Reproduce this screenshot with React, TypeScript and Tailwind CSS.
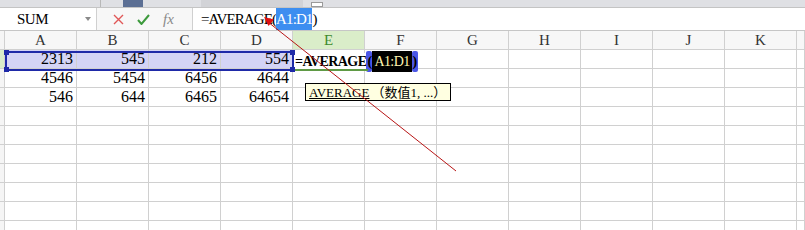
import React from "react";

const COLS = ["A", "B", "C", "D", "E", "F", "G", "H", "I", "J", "K", ""];

const DATA: string[][] = [
  ["2313", "545", "212", "554"],
  ["4546", "5454", "6456", "4644"],
  ["546", "644", "6465", "64654"],
];

const ROW_COUNT = 10;

function FormulaBar() {
  return (
    <div className="flex h-[23px] items-center border-b border-[#c6c6c6] bg-[#f7f7f7]">
      <div className="flex h-[22px] w-[97px] items-center justify-between border-r border-[#d0d0d0] bg-white pl-[17px] pr-[5px]">
        <span className="text-[15px] leading-none tracking-[-0.5px] text-black">SUM</span>
        <svg width="6" height="4" viewBox="0 0 6 4">
          <path d="M0 0h6L3 4z" fill="#8a8a8a" />
        </svg>
      </div>
      <div className="flex w-[95px] items-center gap-[13px] pl-[16px]">
        <svg width="11" height="11" viewBox="0 0 11 11">
          <path d="M1 1l9 9M10 1l-9 9" stroke="#e05757" strokeWidth="1.4" />
        </svg>
        <svg width="13" height="11" viewBox="0 0 13 11">
          <path d="M1 6l3.5 4L12 1" stroke="#3d9a3d" strokeWidth="2" fill="none" />
        </svg>
        <span className="text-[15px] italic leading-none text-[#8a8a8a]">fx</span>
      </div>
      <div className="flex h-[22px] flex-1 items-center border-l border-[#d0d0d0] bg-white pl-[8px] text-[15px] tracking-[-0.9px] text-black">
        <span>=AVERAGE(</span>
        <span className="bg-[#3d8ef0] text-white">A1:D1</span>
        <span>)</span>
      </div>
    </div>
  );
}

export default function App() {
  return (
    <div className="relative h-[230px] w-[805px] overflow-hidden bg-white [font-family:'Liberation_Serif','Noto_Sans_CJK_SC',serif]">
      <div className="flex h-[8px] items-stretch border-b border-[#c4c4c4] bg-[#dfe0e4]">
        <div className="w-[100px]" />
        <div className="w-px bg-[#b8b8b8]" />
        <div className="w-[22px]" />
        <div className="w-[20px] bg-[#5c6f94]" />
        <div className="w-[58px]" />
        <div className="w-[102px] bg-[#d2d3d7]" />
        <div className="w-[8px]" />
        <div className="mt-[2px] w-[12px] border border-[#9a9a9a] bg-white" />
        <div className="flex-1" />
      </div>
      <FormulaBar />
      <div className="grid grid-cols-[5px_repeat(11,72px)_1fr] grid-rows-[repeat(11,19px)]">
        <div className="border-r border-b border-[#d0d0d0] bg-[#f5f5f5]" />
        {COLS.map((c, i) => (
          <div
            key={c + i}
            className={
              i === 4
                ? "flex items-center justify-center border-r border-b border-[#d0d0d0] bg-[#daedc9] text-[15px] text-[#3f8a2c]"
                : "flex items-center justify-center border-r border-b border-[#d0d0d0] bg-[#f7f7f7] text-[15px] text-[#333]"
            }
          >
            {c}
          </div>
        ))}
        {Array.from({ length: ROW_COUNT }).map((_, r) => (
          <React.Fragment key={r}>
            <div className={r === 0 ? "border-r border-b border-[#d0d0d0] bg-[#daedc9]" : "border-r border-b border-[#d0d0d0] bg-[#f5f5f5]"} />
            {COLS.map((c, ci) => {
              const val = DATA[r]?.[ci];
              const sel = r === 0 && ci < 4;
              return (
                <div
                  key={ci}
                  className={
                    sel
                      ? "flex items-center justify-end border-r border-b border-[#d0d0d0] bg-[#d4d4f6] pr-[3px] text-[16px] leading-none text-black"
                      : "flex items-center justify-end border-r border-b border-[#d0d0d0] pr-[3px] text-[16px] leading-none text-black"
                  }
                >
                  {val}
                </div>
              );
            })}
          </React.Fragment>
        ))}
      </div>

      {/* selection frame A1:D1 */}
      <div className="absolute left-[5px] top-[51px] h-[20px] w-[289px] border-2 border-[#1f2aa8]">
        <div className="absolute -left-[3px] -top-[3px] h-[5px] w-[5px] bg-[#1f2aa8]" />
        <div className="absolute -right-[3px] -top-[3px] h-[5px] w-[5px] bg-[#1f2aa8]" />
        <div className="absolute -bottom-[3px] -left-[3px] h-[5px] w-[5px] bg-[#1f2aa8]" />
        <div className="absolute -bottom-[3px] -right-[3px] h-[5px] w-[5px] bg-[#1f2aa8]" />
      </div>

      {/* edited cell E1 */}
      <div className="absolute left-[295px] top-[53px] flex h-[17px] items-center bg-white text-[14px] font-bold tracking-[-0.6px] text-black">
        <span>=AVERAGE</span>
        <span className="rounded-[2px] bg-[#4b57e6] px-px">(</span>
        <span className="bg-black px-[2px] font-normal text-[#fff6b0]">A1:D1</span>
        <span className="rounded-[2px] bg-[#4b57e6] px-px">)</span>
      </div>
      <div className="absolute left-[295px] top-[69px] h-[2px] w-[73px] bg-[#5f9a45]" />

      {/* tooltip */}
      <div className="absolute left-[305px] top-[83px] flex h-[18px] items-center border border-black bg-[#ffffe1] pl-[3px] pr-[4px] text-[13px] leading-none text-black">
        <span className="underline">AVERAGE</span>
        <span className="ml-[2px]">（数值1, ...）</span>
      </div>

      {/* red arrow */}
      <svg className="pointer-events-none absolute left-0 top-0" width="805" height="230" viewBox="0 0 805 230">
        <line x1="456" y1="171" x2="268" y2="22" stroke="#b81515" strokeWidth="1" />
        <path d="M264 17l10 2.5-5.5 6.5z" fill="#e01010" />
      </svg>
    </div>
  );
}
